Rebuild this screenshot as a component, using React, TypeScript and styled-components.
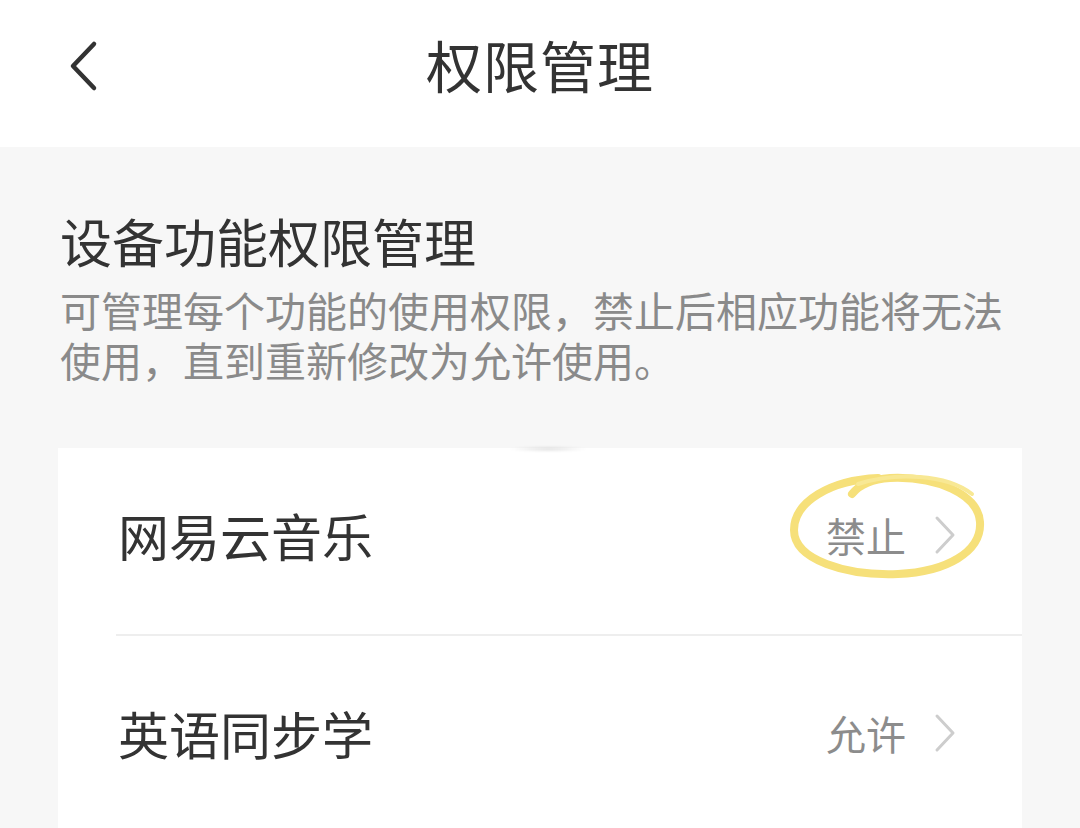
import React from "react";
import styled, { createGlobalStyle } from "styled-components";

const Global = createGlobalStyle`
  html, body { margin: 0; padding: 0; background: #f7f7f7; }
  body { font-family: "Noto Sans CJK SC", "Noto Sans", sans-serif; }
  * { box-sizing: border-box; }
`;

const Page = styled.div`
  width: 1080px;
  height: 828px;
  overflow: hidden;
  background: #f7f7f7;
  display: flex;
  flex-direction: column;
`;

const Header = styled.header`
  flex-shrink: 0;
  height: 147px;
  background: #ffffff;
  display: grid;
  grid-template-columns: 1fr auto 1fr;
  align-items: start;
  padding-top: 33px;
`;

const BackButton = styled.button`
  justify-self: start;
  margin-left: 63px;
  margin-top: 7px;
  width: 40px;
  height: 52px;
  border: none;
  background: transparent;
  padding: 0;
  display: flex;
  align-items: center;
  justify-content: center;
  cursor: pointer;
`;

const Title = styled.h1`
  margin: 0;
  font-size: 56px;
  line-height: 62px;
  font-weight: 400;
  color: #333333;
  letter-spacing: 1px;
`;

const Intro = styled.section`
  flex-shrink: 0;
  padding: 66px 56px 0 60px;
`;

const SectionTitle = styled.h2`
  margin: 0;
  font-size: 52px;
  line-height: 56px;
  font-weight: 400;
  color: #333333;
`;

const Desc = styled.p`
  margin: 15px 0 0;
  font-size: 41px;
  line-height: 50px;
  color: #8a8a8a;
  font-weight: 400;
`;

const Card = styled.div`
  flex: 1 0 auto;
  margin: 64px 58px 0;
  background: #ffffff;
  position: relative;
  &::before {
    content: "";
    position: absolute;
    left: 450px;
    top: -2px;
    width: 80px;
    height: 6px;
    border-radius: 50%;
    background: radial-gradient(ellipse at center, rgba(0,0,0,0.12), rgba(0,0,0,0) 70%);
    filter: blur(1px);
  }
`;

const Row = styled.div<{ $height: number }>`
  position: relative;
  height: ${(p) => p.$height}px;
  display: flex;
  align-items: center;
  padding: 0 64px 12px 60px;
`;

const Divider = styled.div`
  height: 2px;
  margin-left: 58px;
  background: #eeeeee;
`;

const AppName = styled.span`
  flex: 1;
  font-size: 51px;
  line-height: 56px;
  color: #333333;
`;

const Status = styled.span`
  font-size: 40px;
  line-height: 44px;
  color: #8c8c8c;
  margin-right: 26px;
`;

const Highlight = styled.svg`
  position: absolute;
  left: 728px;
  top: 16px;
  pointer-events: none;
`;

const Chevron = () => (
  <svg width="26" height="40" viewBox="0 0 26 40">
    <path d="M5 3 L21 20 L5 37" fill="none" stroke="#cdcdcd" strokeWidth="3" strokeLinecap="round" strokeLinejoin="round" />
  </svg>
);

const BackIcon = () => (
  <svg width="34" height="52" viewBox="0 0 34 52">
    <path d="M28 4 L7 26 L28 48" fill="none" stroke="#333333" strokeWidth="4.5" strokeLinecap="round" strokeLinejoin="round" />
  </svg>
);

const items = [
  { name: "网易云音乐", status: "禁止", marked: true, height: 186 },
  { name: "英语同步学", status: "允许", marked: false, height: 206 },
];

export default function App() {
  return (
    <>
      <Global />
      <Page>
        <Header>
          <BackButton aria-label="返回">
            <BackIcon />
          </BackButton>
          <Title>权限管理</Title>
          <div />
        </Header>
        <Intro>
          <SectionTitle>设备功能权限管理</SectionTitle>
          <Desc>可管理每个功能的使用权限，禁止后相应功能将无法使用，直到重新修改为允许使用。</Desc>
        </Intro>
        <Card>
          {items.map((it, i) => (
            <React.Fragment key={it.name}>
              {i > 0 && <Divider />}
              <Row $height={it.height}>
                <AppName>{it.name}</AppName>
                <Status>{it.status}</Status>
                <Chevron />
                {it.marked && (
                  <Highlight width="200" height="120" viewBox="0 0 200 120">
                    <path
                      d="M92 14 C 44 16, 8 38, 8 66 C 8 96, 60 112, 112 110 C 160 108, 196 88, 194 58 C 192 30, 150 12, 104 14 C 88 15, 74 20, 66 30"
                      fill="none"
                      stroke="#f6e07a"
                      strokeWidth="8"
                      strokeLinecap="round"
                    />
                    <path
                      d="M72 20 C 110 8, 160 10, 186 30"
                      fill="none"
                      stroke="#f8e894"
                      strokeWidth="4"
                      strokeLinecap="round"
                    />
                  </Highlight>
                )}
              </Row>
            </React.Fragment>
          ))}
        </Card>
      </Page>
    </>
  );
}
